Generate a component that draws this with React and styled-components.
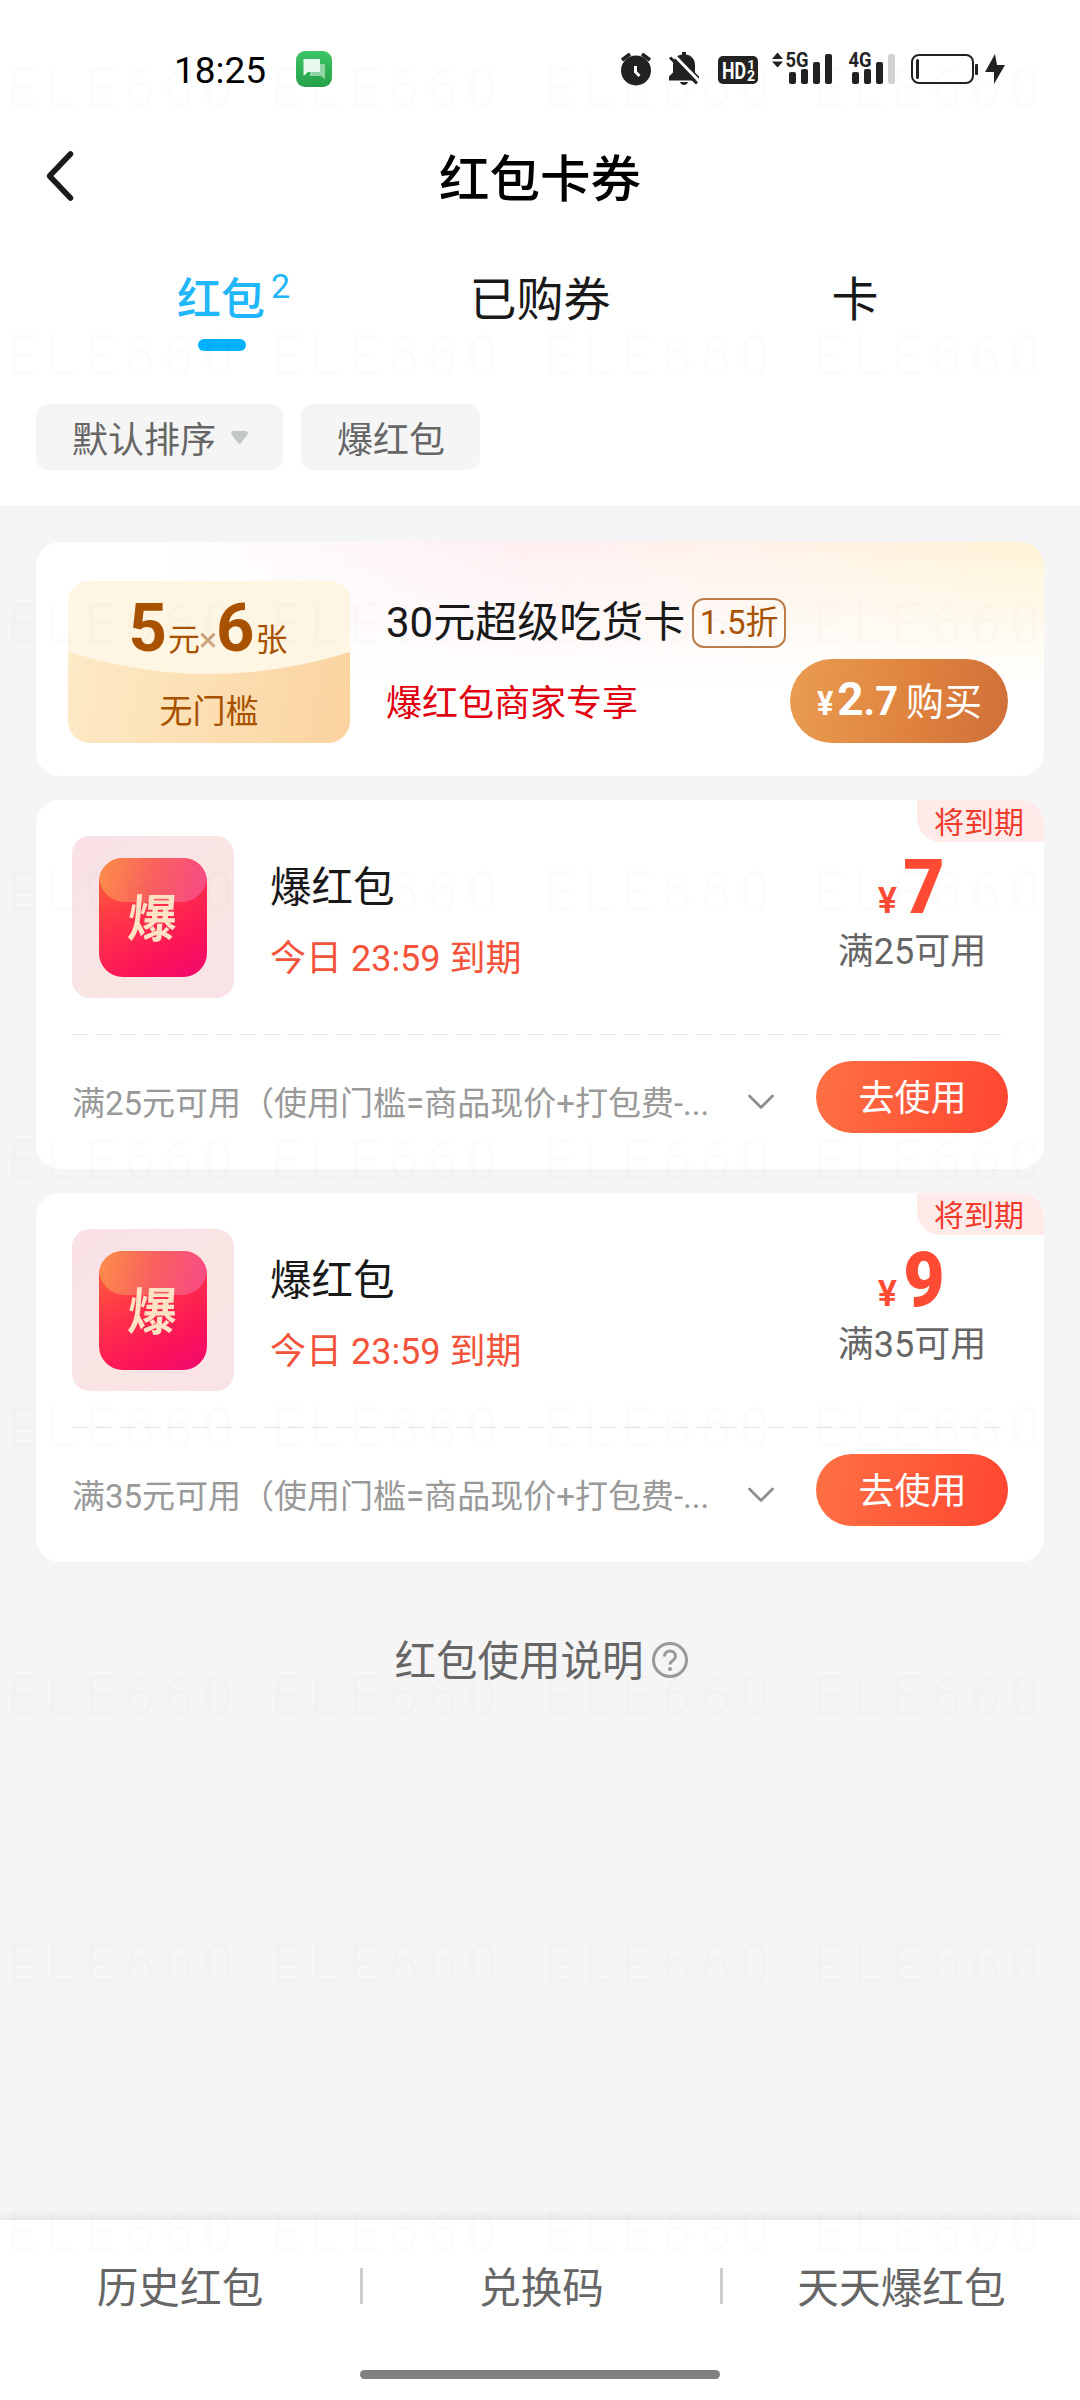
import React from 'react';
import styled, { createGlobalStyle } from 'styled-components';

const GlobalStyle = createGlobalStyle`
  * {
    box-sizing: border-box;
  }

  body {
    margin: 0;
    background-color: #f5f5f5;
    font-family: Roboto, "Noto Sans CJK SC", sans-serif;
    color: #191919;
  }
`;

const Page = styled.div`
  position: relative;
  display: flex;
  flex-direction: column;
  width: 1080px;
  height: 2400px;
  overflow: hidden;
  background-color: #f5f5f5;
`;

const Header = styled.header`
  height: 506px;
  background-color: #fff;
`;

const StatusBar = styled.div`
  display: flex;
  align-items: center;
  height: 138px;
  padding: 0 75px 0 174px;
`;

const Clock = styled.span`
  padding-top: 3px;
  font-size: 37px;
  line-height: 40px;
  color: #000;
  width: 122px;
`;

const StatusIcons = styled.svg`
  margin-left: auto;
  display: block;
`;

const TitleBar = styled.div`
  display: grid;
  grid-template-columns: 120px 1fr 120px;
  align-items: center;
  height: 78px;
`;

const BackButton = styled.button`
  border: none;
  background: none;
  padding: 0 0 2px 44px;
  display: flex;
`;

const PageTitle = styled.h1`
  margin: 0;
  padding-top: 5px;
  text-align: center;
  font-size: 50.5px;
  line-height: 70px;
  font-weight: 500;
  color: #000;
`;

const Tabs = styled.nav`
  display: grid;
  grid-template-columns: repeat(3, 315px);
  justify-content: center;
  height: 188px;
  padding-top: 50px;
`;

const Tab = styled.div`
  display: flex;
  flex-direction: column;
  align-items: center;
  font-size: ${(props) => (props.$active ? '44px' : '47px')};
  font-weight: ${(props) => (props.$active ? 500 : 400)};
  line-height: 68px;
  color: ${(props) => (props.$active ? '#1fb6fa' : '#191919')};
`;

const TabLabel = styled.div`
  display: flex;
  padding-left: ${(props) => (props.$badge ? '17px' : '0')};
`;

const TabCount = styled.span`
  margin-left: 6px;
  font-size: 34px;
  font-weight: 400;
  line-height: 41px;
`;

const TabLine = styled.div`
  width: 48px;
  height: 12px;
  margin: 5px 6px 0 0;
  border-radius: 6px;
  background-color: #00b1ff;
`;

const Filters = styled.div`
  display: flex;
  gap: 18px;
  padding-left: 36px;
`;

const FilterChip = styled.button`
  display: flex;
  align-items: center;
  gap: 15px;
  height: 66px;
  padding: 0 35px 0 36px;
  border: none;
  border-radius: 12px;
  background-color: #f5f5f5;
  font-family: inherit;
  font-size: 36px;
  color: #666;
`;

const Content = styled.main`
  flex: 1;
  display: flex;
  flex-direction: column;
  gap: 24px;
  padding: 36px 36px 0;
`;

const PromoCard = styled.section`
  display: flex;
  height: 234px;
  padding: 39px 36px 33px 32px;
  border-radius: 24px;
  background:
    linear-gradient(180deg, rgba(255, 255, 255, 0) 0%, #fff 62%),
    linear-gradient(90deg, #fff 12%, #fff0f2 48%, #fff2ea 70%, #fff4d6 100%);
`;

const PromoVoucher = styled.div`
  position: relative;
  width: 282px;
  height: 162px;
  overflow: hidden;
  border-radius: 22px;
  background: linear-gradient(100deg, #fdebc8, #fbd39f);
  color: #a85200;
  text-align: center;

  &::before {
    content: '';
    position: absolute;
    left: -322px;
    bottom: 69px;
    width: 926px;
    height: 926px;
    border-radius: 50%;
    background-color: #fff5e3;
  }
`;

const VoucherValue = styled.div`
  position: relative;
  display: flex;
  justify-content: center;
  align-items: baseline;
  height: 100px;
  padding-right: 2px;
  font-size: 32px;
  line-height: 95px;

  b {
    font-size: 67px;
    font-weight: 700;
    margin: 0 1px 0 0;
  }

  i {
    font-style: normal;
    font-size: 34px;
    color: #c9a37a;
    margin: 0 -1px;
  }
`;

const VoucherNote = styled.div`
  position: relative;
  font-size: 33px;
  line-height: 61px;
`;

const PromoInfo = styled.div`
  flex: 1;
  display: flex;
  flex-direction: column;
  padding: 17px 0 0 36px;
`;

const PromoTitle = styled.div`
  display: flex;
  align-items: center;
  height: 50px;
  font-size: 42px;
  line-height: 44px;
  white-space: nowrap;
`;

const PromoName = styled.span`
  padding-bottom: 1px;
`;

const Discount = styled.span`
  display: flex;
  align-items: center;
  justify-content: center;
  width: 94px;
  height: 50px;
  margin-left: 7px;
  border: 2px solid #bd7d4a;
  border-radius: 12px;
  font-size: 33px;
  color: #a85200;
`;

const PromoRow = styled.div`
  display: flex;
  justify-content: space-between;
  margin-top: 11px;
`;

const PromoSub = styled.div`
  font-size: 36px;
  line-height: 90px;
  height: 84px;
  color: #e0000f;
`;

const BuyButton = styled.button`
  display: flex;
  align-items: baseline;
  justify-content: center;
  width: 218px;
  height: 84px;
  padding: 0;
  border: none;
  border-radius: 42px;
  background: linear-gradient(100deg, #ea9d52, #df833e 55%, #cf6f3a);
  font-family: inherit;
  font-size: 38px;
  line-height: 80px;
  color: #fff;

  small {
    font-size: 34px;
    font-weight: 700;
    margin-right: 3px;
    transform: scaleX(0.9);
  }

  b {
    font-size: 46px;
    margin-right: 8px;
  }

  em {
    font-style: normal;
    font-size: 40px;
  }
`;

const CouponCard = styled.section`
  position: relative;
  height: 369px;
  padding: 36px 36px 0;
  border-radius: 24px;
  background-color: #fff;
`;

const ExpireTag = styled.span`
  position: absolute;
  top: 0;
  right: 0;
  width: 127px;
  height: 42px;
  padding-left: 17px;
  border-radius: 0 24px 0 24px;
  background-color: #ffeaea;
  font-size: 30px;
  line-height: 45px;
  color: #ef3a2c;
`;

const CouponTop = styled.div`
  display: flex;
  height: 198px;
`;

const CouponThumb = styled.div`
  display: flex;
  align-items: center;
  justify-content: center;
  width: 162px;
  height: 162px;
  border-radius: 18px;
  background: linear-gradient(135deg, #f9e1e6, #fae5e4 60%, #f9e2e6);
`;

const ThumbIcon = styled.div`
  position: relative;
  display: flex;
  align-items: center;
  justify-content: center;
  width: 108px;
  height: 119px;
  overflow: hidden;
  border-radius: 24px;
  background: linear-gradient(150deg, #ff6a35 0%, #ff2f4b 45%, #fb1358 75%, #f00a70 100%);

  &::before {
    content: '';
    position: absolute;
    top: 0;
    left: 0;
    width: 100%;
    height: 44px;
    border-radius: 0 0 26px 26px;
    background: linear-gradient(105deg, #fd9048, #f9605f 50%, #f8498a);
  }
`;

const ThumbChar = styled.span`
  position: relative;
  padding-top: 5px;
  font-size: 51px;
  font-weight: 700;
  line-height: 56px;
  color: #fde3c3;
  transform: skewX(-4deg) scaleX(0.96);
`;

const CouponInfo = styled.div`
  flex: 1;
  padding-left: 36px;
`;

const CouponTitle = styled.h2`
  margin: 22px 0 0;
  font-size: 41.5px;
  line-height: 60px;
  font-weight: 400;
`;

const CouponExpire = styled.p`
  margin: 16px 0 0;
  font-size: 36px;
  line-height: 50px;
  color: #f4533b;
`;

const CouponAmount = styled.div`
  display: flex;
  flex-direction: column;
  align-items: center;
  width: 192px;
  padding-top: 15px;
`;

const Price = styled.div`
  display: flex;
  align-items: baseline;
  height: 72px;
  line-height: 72px;
  font-weight: 700;
  color: #ff4b33;

  small {
    font-size: 36px;
    font-weight: 600;
    margin-right: 5px;
  }

  b {
    font-size: 76px;
    transform: scaleX(0.94);
  }
`;

const Threshold = styled.div`
  margin-top: 4px;
  font-size: 36px;
  line-height: 50px;
  color: #666;
`;

const DashedLine = styled.div`
  height: 1px;
  background: repeating-linear-gradient(90deg, #e4e4e4 0 16px, transparent 18px 24px);
`;

const CouponBottom = styled.div`
  display: flex;
  align-items: center;
  height: 72px;
  margin-top: 26px;

  svg {
    margin-top: 10px;
  }
`;

const CouponRule = styled.span`
  width: 676px;
  padding-top: 7px;
  font-size: 33px;
  color: #999;
  white-space: nowrap;
`;

const UseButton = styled.button`
  width: 192px;
  height: 72px;
  margin-left: auto;
  padding: 4px 0 0 1px;
  border: none;
  border-radius: 36px;
  background: linear-gradient(100deg, #ff7144, #ff4630);
  font-family: inherit;
  font-size: 36px;
  line-height: 68px;
  color: #fff;
`;

const HelpLink = styled.div`
  display: flex;
  align-items: center;
  justify-content: center;
  gap: 8px;
  margin-top: 54px;
  padding-left: 2px;
  font-size: 41.5px;
  line-height: 44px;
  color: #666;

  svg {
    margin-bottom: 4px;
  }
`;

const Footer = styled.footer`
  height: 180px;
  background-color: #fff;
  box-shadow: 0 -3px 8px rgba(0, 0, 0, 0.07);
`;

const FooterLinks = styled.div`
  display: grid;
  grid-template-columns: 363px 360px 357px;
  height: 150px;
  padding-top: 48px;
`;

const FooterLink = styled.div`
  height: 36px;
  border-right: ${(props) => (props.$last ? 'none' : '3px solid #ccc')};
  text-align: center;
  font-size: 41.7px;
  line-height: 42px;
  color: #666;
`;

const HomeBar = styled.div`
  width: 360px;
  height: 9px;
  margin: 0 auto;
  border-radius: 5px;
  background-color: #808080;
`;

// faint account stamp repeated over the whole screen
const Watermark = styled.div`
  position: absolute;
  top: 68px;
  left: 6px;
  display: grid;
  grid-template-columns: 264px 273px 270px 260px;
  grid-auto-rows: 268px;
  pointer-events: none;
  color: rgba(0, 0, 0, 0.013);
`;

const MarkName = styled.div`
  font-size: 55px;
  line-height: 40px;
  letter-spacing: 8.5px;
`;

const MarkNumber = styled.div`
  margin-top: 8px;
  font-size: 32px;
  line-height: 26px;
  letter-spacing: 5.5px;
`;

const ChatIcon = () => (
  <svg width="36" height="36" viewBox="0 0 36 36">
    <defs>
      <linearGradient id="chat" x1="0" y1="0" x2="0" y2="1">
        <stop offset="0" stopColor="#3cc566" />
        <stop offset="1" stopColor="#26a04a" />
      </linearGradient>
    </defs>
    <rect width="36" height="36" rx="9" fill="url(#chat)" />
    <path d="M14 13h15v15l-4-3H14z" fill="#8fd6a3" />
    <path d="M7.500 8h15.500a1 1 0 0 1 1 1v12H12l-4.500 4z" fill="#e9f8ed" />
  </svg>
);

const StatusGlyphs = () => (
  <StatusIcons width="384" height="50" viewBox="621 44 384 50" fill="#222">
    {/* alarm */}
    <circle cx="636" cy="70.500" r="15" />
    <path d="M622 60l8-6M650 60l-8-6" stroke="#222" strokeWidth="3.500" fill="none" />
    <path d="M635.500 66v6l4 4" stroke="#fff" strokeWidth="3" fill="none" />
    {/* muted bell */}
    <path d="M682 54.500v-2.500h4v2.500c6 1 9 5.500 9 11v7l4 4v4h-30v-4l4-4v-7c0-5.500 3-10 9-11z" />
    <path d="M680 82h8c-1 4-7 4-8 0z" />
    <path d="M672 53l28 29" stroke="#fff" strokeWidth="3" />
    <path d="M670 57.500l27 26" stroke="#222" strokeWidth="3" />
    {/* HD */}
    <rect x="718" y="56" width="40" height="28" rx="5" />
    <text x="722" y="78.500" fill="#fff" fontSize="23" fontWeight="700" textLength="24" lengthAdjust="spacingAndGlyphs">HD</text>
    <text x="747.500" y="69" fill="#fff" fontSize="13" fontWeight="700">1</text>
    <text x="747" y="81" fill="#fff" fontSize="14" fontWeight="700">2</text>
    {/* 5G */}
    <path d="M772 59l5.500-6.500 5.500 6.500zM772 61.500h11l-5.500 6z" />
    <text x="785.500" y="67" fontSize="21" fontWeight="700" textLength="23" lengthAdjust="spacingAndGlyphs">5G</text>
    <rect x="789" y="72" width="7" height="12" rx="2" />
    <rect x="801" y="69" width="7" height="15" rx="2" />
    <rect x="813" y="62" width="7" height="22" rx="2" />
    <rect x="825" y="54" width="7" height="30" rx="2" />
    {/* 4G */}
    <text x="848.500" y="67" fontSize="21" fontWeight="700" textLength="23" lengthAdjust="spacingAndGlyphs">4G</text>
    <rect x="852" y="72" width="7" height="12" rx="2" />
    <rect x="864" y="69" width="7" height="15" rx="2" />
    <rect x="876" y="62" width="7" height="22" rx="2" />
    <rect x="888" y="54" width="7" height="30" rx="2" fill="#d2d2d2" />
    {/* battery */}
    <rect x="912" y="55" width="61" height="28" rx="7" fill="none" stroke="#222" strokeWidth="2" />
    <rect x="916" y="59" width="3" height="20" rx="1.500" />
    <rect x="975" y="64" width="3" height="11" rx="1" />
    <path d="M995 54l-10 18h9v12l11-19h-8z" />
  </StatusIcons>
);

const BackIcon = () => (
  <svg width="32" height="54" viewBox="0 0 32 54" fill="none" stroke="#1a1a1a" strokeWidth="5.500" strokeLinecap="round" strokeLinejoin="round">
    <path d="M26.500 5L5.500 27l21 22" />
  </svg>
);

const ChevronDown = () => (
  <svg width="26" height="16" viewBox="0 0 26 16" fill="none" stroke="#8f8f8f" strokeWidth="2.800" strokeLinecap="round" strokeLinejoin="round">
    <path d="M1.500 2L13 13.500 24.500 2" />
  </svg>
);

const SortArrow = () => (
  <svg width="17" height="13" viewBox="0 0 17 13">
    <path d="M2 0h13q3 1 1 4l-6 8q-1.500 1.500-3 0L1 4q-2-3 1-4z" fill="#c3c8c7" />
  </svg>
);

const HelpIcon = () => (
  <svg width="36" height="36" viewBox="0 0 36 36" fill="none" stroke="#999">
    <circle cx="18" cy="18" r="16.500" strokeWidth="3" />
    <path d="M12.500 14.500c0-7.500 11-7.500 11 0 0 4-5.500 4-5.500 8" strokeWidth="3" />
    <circle cx="18" cy="27" r="2" fill="#999" stroke="none" />
  </svg>
);

const coupons = [
  { amount: 7, min: 25 },
  { amount: 9, min: 35 },
];

const marks = Array.from({ length: 36 }, (_, i) => i);

const App = () => (
  <Page>
    <GlobalStyle />
    <Header>
      <StatusBar>
        <Clock>18:25</Clock>
        <ChatIcon />
        <StatusGlyphs />
      </StatusBar>
      <TitleBar>
        <BackButton>
          <BackIcon />
        </BackButton>
        <PageTitle>红包卡券</PageTitle>
      </TitleBar>
      <Tabs>
        <Tab $active>
          <TabLabel $badge>
            红包<TabCount>2</TabCount>
          </TabLabel>
          <TabLine />
        </Tab>
        <Tab>
          <TabLabel>已购券</TabLabel>
        </Tab>
        <Tab>
          <TabLabel>卡</TabLabel>
        </Tab>
      </Tabs>
      <Filters>
        <FilterChip>
          默认排序
          <SortArrow />
        </FilterChip>
        <FilterChip>爆红包</FilterChip>
      </Filters>
    </Header>

    <Content>
      <PromoCard>
        <PromoVoucher>
          <VoucherValue>
            <b>5</b>元<i>×</i><b>6</b>张
          </VoucherValue>
          <VoucherNote>无门槛</VoucherNote>
        </PromoVoucher>
        <PromoInfo>
          <PromoTitle>
            <PromoName>30元超级吃货卡</PromoName>
            <Discount>1.5折</Discount>
          </PromoTitle>
          <PromoRow>
            <PromoSub>爆红包商家专享</PromoSub>
            <BuyButton>
              <small>¥</small>
              <b>2<em>.7</em></b>
              购买
            </BuyButton>
          </PromoRow>
        </PromoInfo>
      </PromoCard>

      {coupons.map((coupon) => (
        <CouponCard key={coupon.amount}>
          <ExpireTag>将到期</ExpireTag>
          <CouponTop>
            <CouponThumb>
              <ThumbIcon>
                <ThumbChar>爆</ThumbChar>
              </ThumbIcon>
            </CouponThumb>
            <CouponInfo>
              <CouponTitle>爆红包</CouponTitle>
              <CouponExpire>今日 23:59 到期</CouponExpire>
            </CouponInfo>
            <CouponAmount>
              <Price>
                <small>¥</small>
                <b>{coupon.amount}</b>
              </Price>
              <Threshold>满{coupon.min}可用</Threshold>
            </CouponAmount>
          </CouponTop>
          <DashedLine />
          <CouponBottom>
            <CouponRule>满{coupon.min}元可用（使用门槛=商品现价+打包费-...</CouponRule>
            <ChevronDown />
            <UseButton>去使用</UseButton>
          </CouponBottom>
        </CouponCard>
      ))}

      <HelpLink>
        红包使用说明
        <HelpIcon />
      </HelpLink>
    </Content>

    <Footer>
      <FooterLinks>
        <FooterLink>历史红包</FooterLink>
        <FooterLink>兑换码</FooterLink>
        <FooterLink $last>天天爆红包</FooterLink>
      </FooterLinks>
      <HomeBar />
    </Footer>

    <Watermark aria-hidden="true">
      {marks.map((mark) => (
        <div key={mark}>
          <MarkName>ELE660</MarkName>
          <MarkNumber>1754520716</MarkNumber>
        </div>
      ))}
    </Watermark>
  </Page>
);

export default App;
